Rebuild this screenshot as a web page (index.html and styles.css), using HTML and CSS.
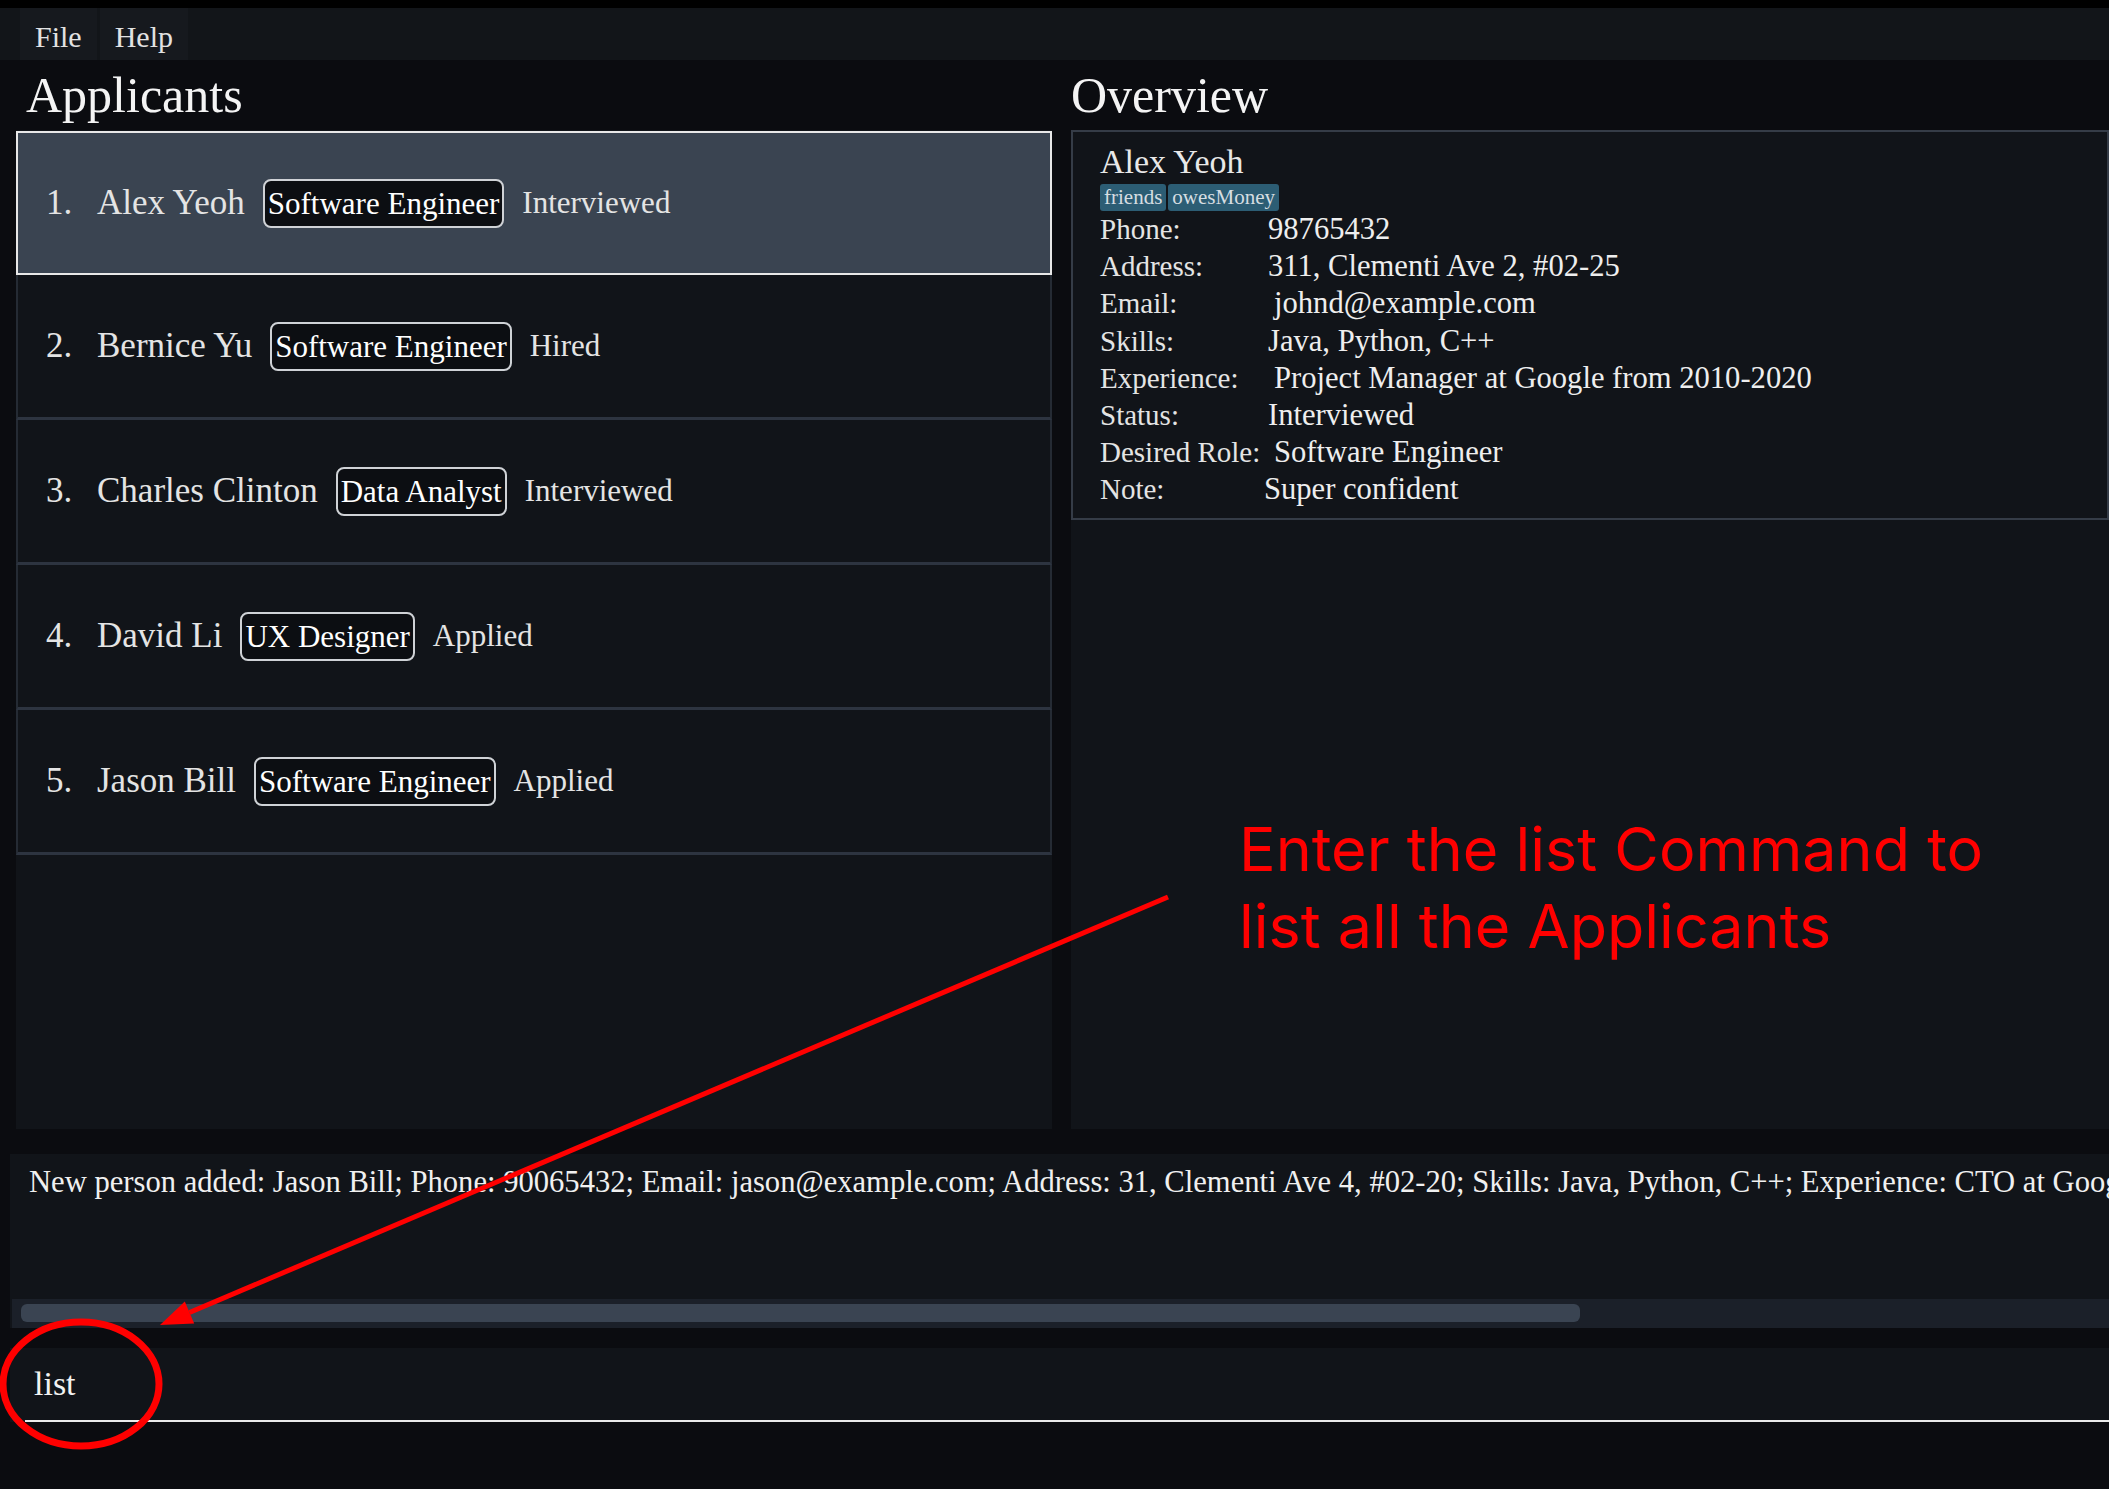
FILE: index.html
```html
<!DOCTYPE html>
<html lang="en">
<head>
<meta charset="utf-8">
<title>Applicants</title>
<link rel="stylesheet" href="styles.css">
</head>
<body>
<div class="window">
  <div class="title-strip"></div>
  <nav class="menubar">
    <span class="menu-item">File</span>
    <span class="menu-item">Help</span>
  </nav>
  <main class="panes">
    <section class="pane">
      <h1 class="pane-title">Applicants</h1>
      <div class="list-panel">
        <ol class="cards">
          <li class="card card--selected"><span class="card-index">1.</span><span class="card-name">Alex Yeoh</span><span class="role-tag">Software Engineer</span><span class="card-status">Interviewed</span></li>
          <li class="card"><span class="card-index">2.</span><span class="card-name">Bernice Yu</span><span class="role-tag">Software Engineer</span><span class="card-status">Hired</span></li>
          <li class="card"><span class="card-index">3.</span><span class="card-name">Charles Clinton</span><span class="role-tag">Data Analyst</span><span class="card-status">Interviewed</span></li>
          <li class="card"><span class="card-index">4.</span><span class="card-name">David Li</span><span class="role-tag">UX Designer</span><span class="card-status">Applied</span></li>
          <li class="card"><span class="card-index">5.</span><span class="card-name">Jason Bill</span><span class="role-tag">Software Engineer</span><span class="card-status">Applied</span></li>
        </ol>
      </div>
    </section>
    <section class="pane">
      <h1 class="pane-title pane-title--overview">Overview</h1>
      <div class="overview-panel">
        <div class="detail-box">
          <div class="detail-name">Alex Yeoh</div>
          <div class="detail-tags"><span class="label-tag">friends</span><span class="label-tag">owesMoney</span></div>
          <dl class="detail-grid">
            <dt>Phone:</dt><dd>98765432</dd>
            <dt>Address:</dt><dd>311, Clementi Ave 2, #02-25</dd>
            <dt>Email:</dt><dd class="dd--wide">johnd@example.com</dd>
            <dt>Skills:</dt><dd>Java, Python, C++</dd>
            <dt>Experience:</dt><dd class="dd--wide">Project Manager at Google from 2010-2020</dd>
            <dt>Status:</dt><dd>Interviewed</dd>
            <dt>Desired Role:</dt><dd class="dd--wide">Software Engineer</dd>
            <dt>Note:</dt><dd class="dd--narrow">Super confident</dd>
          </dl>
        </div>
      </div>
    </section>
  </main>
  <section class="result">
    <div class="result-text">New person added: Jason Bill; Phone: 90065432; Email: jason@example.com; Address: 31, Clementi Ave 4, #02-20; Skills: Java, Python, C++; Experience: CTO at Google</div>
    <div class="hscroll"><div class="hscroll-thumb"></div></div>
  </section>
  <section class="command">
    <div class="command-input">list</div>
  </section>
</div>

<svg class="annotation-marks" width="2109" height="1489" viewBox="0 0 2109 1489" xmlns="http://www.w3.org/2000/svg">
  <line x1="1168" y1="897" x2="189.5" y2="1312.5" stroke="#ff0000" stroke-width="5"/>
  <polygon points="160,1325 194.2,1323.5 184.8,1301.5" fill="#ff0000"/>
  <ellipse cx="81" cy="1384" rx="78" ry="62" fill="none" stroke="#ff0000" stroke-width="7"/>
</svg>
<p class="annotation-note">Enter the list Command to<br>list all the Applicants</p>
</body>
</html>
```

FILE: styles.css
```css
* {
  box-sizing: border-box;
}

html,
body {
  margin: 0;
  padding: 0;
}

body {
  width: 2109px;
  height: 1489px;
  overflow: hidden;
  position: relative;
  background: #0b0c10;
  color: #e6e6e6;
  font-family: "Liberation Serif", "Times New Roman", serif;
}

.title-strip {
  height: 8px;
  background: #000;
}

.menubar {
  height: 52px;
  display: flex;
  gap: 3px;
  padding-left: 20px;
  background: #121519;
}

.menu-item {
  height: 52px;
  padding: 6px 15px 0;
  font-size: 30px;
  line-height: 46px;
  background: #16191e;
  color: #e2e2e2;
}

.panes {
  display: grid;
  grid-template-columns: 1036px 1038px;
  column-gap: 19px;
  padding-left: 16px;
  height: 1069px;
}

.pane {
  display: flex;
  flex-direction: column;
  min-height: 0;
}

.pane-title {
  margin: 0;
  height: 70px;
  padding-left: 10px;
  font-size: 50px;
  font-weight: normal;
  line-height: 70px;
  color: #f4f4f4;
}

.pane-title--overview {
  padding-left: 0;
}

.list-panel {
  flex: 1;
  background: #111419;
}

.cards {
  list-style: none;
  margin: 0;
  padding: 0;
}

.card {
  height: 145px;
  display: flex;
  align-items: center;
  gap: 18px;
  padding-left: 28px;
  border-left: 2px solid #252b34;
  border-right: 2px solid #252b34;
  border-bottom: 3px solid #2d3440;
  font-size: 35px;
  color: #e4e4e4;
}

.card--selected {
  height: 144px;
  border: 2px solid #e8e8e8;
  background: #3a4451;
  margin-top: 1px;
}

.card-index {
  width: 33px;
}

.role-tag {
  padding: 2px 3px;
  border: 2px solid #cfd2d6;
  border-radius: 8px;
  background: #0c0e12;
  color: #ffffff;
  font-size: 31px;
  line-height: 41px;
}

.card-status {
  font-size: 31px;
}

.overview-panel {
  flex: 1;
  background: #111419;
}

.detail-box {
  border: 2px solid #353c47;
  padding: 10px 0 9px 27px;
}

.detail-name {
  font-size: 34px;
  line-height: 40px;
  color: #e8e8e8;
}

.detail-tags {
  display: flex;
  gap: 2px;
  margin-top: 2px;
}

.label-tag {
  padding: 0 4px;
  border-radius: 3px;
  background: #2c5d74;
  color: #d6dde2;
  font-size: 21px;
  line-height: 27px;
}

.detail-grid {
  display: grid;
  grid-template-columns: 168px auto;
  margin: 0;
}

.detail-grid dt,
.detail-grid dd {
  margin: 0;
  line-height: 37.2px;
  white-space: nowrap;
}

.detail-grid dt {
  font-size: 29px;
  color: #e4e4e4;
}

.detail-grid dd {
  font-size: 30.6px;
  color: #eeeeee;
}

.detail-grid .dd--wide {
  padding-left: 6px;
}

.detail-grid .dd--narrow {
  margin-left: -4px;
}

.result {
  margin: 25px 0 0 10px;
  height: 174px;
  display: flex;
  flex-direction: column;
  overflow: hidden;
  background: #111419;
}

.result-text {
  flex: 1;
  padding: 10px 0 0 19px;
  font-size: 30.6px;
  line-height: 36px;
  white-space: nowrap;
  color: #f0f0f0;
}

.hscroll {
  height: 29px;
  margin-left: 2px;
  padding: 5px 0 6px 9px;
  background: #1b2029;
}

.hscroll-thumb {
  width: 1559px;
  height: 18px;
  border-radius: 6px;
  background: #3a4452;
}

.command {
  margin: 20px 0 0 10px;
  height: 74px;
  padding-left: 15px;
  background: #111419;
}

.command-input {
  height: 74px;
  padding: 16px 0 0 9px;
  border-bottom: 2px solid #ebebeb;
  font-size: 34px;
  line-height: 40px;
  color: #f2f2f2;
}

.annotation-marks {
  position: absolute;
  top: 0;
  left: 0;
  pointer-events: none;
}

.annotation-note {
  position: absolute;
  top: 811px;
  left: 1239px;
  margin: 0;
  font-family: Inter, "Liberation Sans", sans-serif;
  font-size: 61px;
  line-height: 77px;
  color: #ff0000;
  white-space: nowrap;
}
```
